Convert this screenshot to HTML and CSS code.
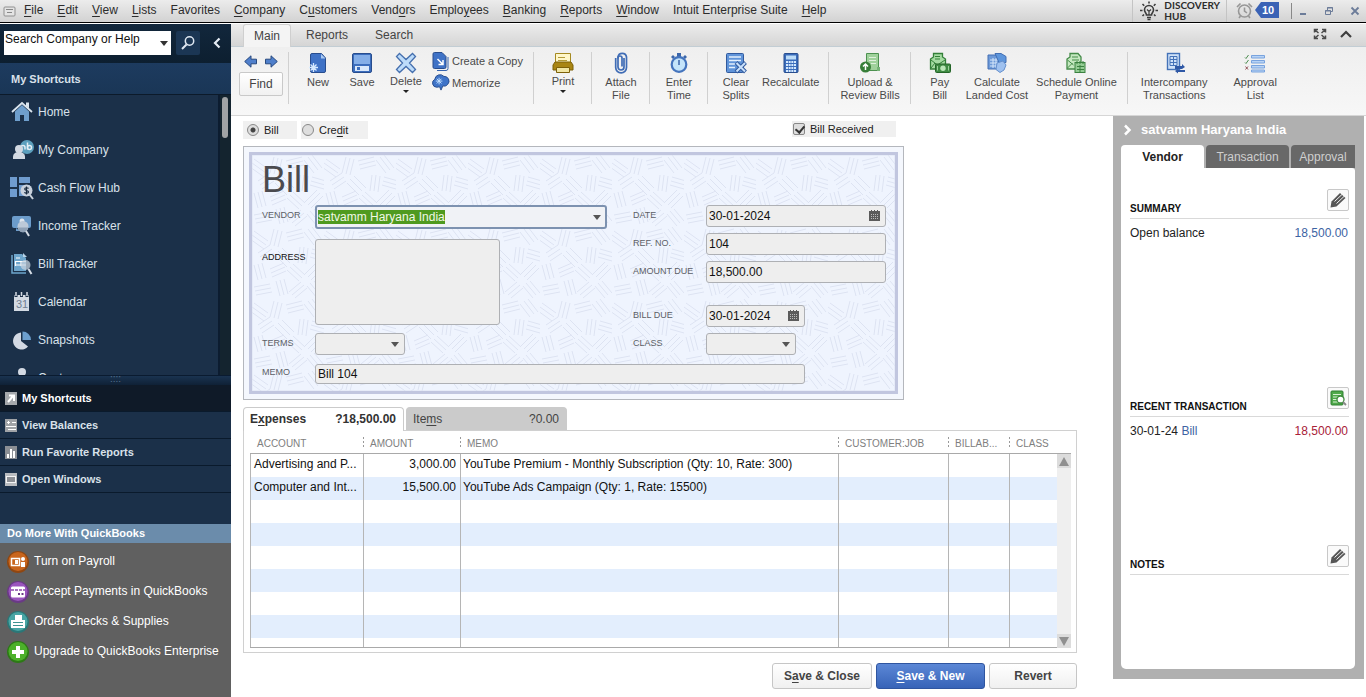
FILE: index.html
```
<!DOCTYPE html>
<html lang="en">
<head>
    <meta charset="UTF-8">
    <meta name="viewport" content="width=device-width, initial-scale=1.0">
    <title>Enter Bills</title>
    <link rel="stylesheet" href="styles.css">
</head>
<body>
    <header class="menubar">
        <svg class="app-icon" width="13" height="11" viewBox="0 0 13 11"><rect x="1" y="1" width="11" height="9" rx="1" fill="#e4e4e4" stroke="#909090"/><path d="M3 3.500h7M4 6.500h5" stroke="#888"/></svg>
        <nav class="menu">
            <a href="#"><u>F</u>ile</a>
            <a href="#"><u>E</u>dit</a>
            <a href="#"><u>V</u>iew</a>
            <a href="#"><u>L</u>ists</a>
            <a href="#">Favorites</a>
            <a href="#"><u>C</u>ompany</a>
            <a href="#">C<u>u</u>stomers</a>
            <a href="#">Vend<u>o</u>rs</a>
            <a href="#">Emplo<u>y</u>ees</a>
            <a href="#"><u>B</u>anking</a>
            <a href="#"><u>R</u>eports</a>
            <a href="#"><u>W</u>indow</a>
            <a href="#">Intuit Enterprise Suite</a>
            <a href="#"><u>H</u>elp</a>
        </nav>
        <a class="discovery" href="#">
            <svg width="20" height="20" viewBox="0 0 20 20" fill="none" stroke="#3c3c3c" stroke-width="1.600"><path d="M7.500 14c0-2-2-2.500-2-5a4.500 4.500 0 0 1 9 0c0 2.500-2 3-2 5zM8 16.500h4M8.500 18.500h3"/><path d="M10 14v-4M8 8.500l2 2 2-2" stroke-width="1.200"/><path d="M10 .5v2M1 9.500h2.500M16.500 9.500H19M3.500 3l1.700 1.700M16.500 3l-1.700 1.700M3.500 15l1.500-1.500M16.500 15L15 13.500"/></svg>
            <span>DISCOVERY<br>HUB</span>
        </a>
        <a class="reminders" href="#">
            <svg width="17" height="17" viewBox="0 0 17 17" fill="none" stroke="#979797" stroke-width="1.600"><circle cx="8.500" cy="9" r="6"/><path d="M8.500 5.500V9l2.500 2M1 5l3.500-3.500M16 5l-3.500-3.500M4.500 14L3 16M12.500 14l1.500 2"/></svg>
            <span class="count">10</span>
        </a>
        <div class="window-buttons">
            <button aria-label="Minimize"><svg width="10" height="10" viewBox="0 0 10 10"><path d="M2 8h6" stroke="#6c7c99" stroke-width="2"/></svg></button>
            <button aria-label="Restore"><svg width="10" height="10" viewBox="0 0 10 10" fill="none" stroke="#6c7c99"><path d="M3.500 4V1.500h5v4H7M3 2h6"/><path d="M1.500 4.500h5v4h-5zM1 5h6"/></svg></button>
            <button aria-label="Close"><svg width="10" height="10" viewBox="0 0 10 10"><path d="M1.500 1.500l7 7M8.500 1.500l-7 7" stroke="#6c7c99" stroke-width="1.800"/></svg></button>
        </div>
    </header>

    <div class="workspace">
        <aside class="sidebar">
            <div class="search">
                <div class="search-box">
                    <input type="text" id="busca" aria-label="Search Company or Help" value="Search Company or Help">
                    <svg class="arrow" width="8" height="5" viewBox="0 0 8 5"><path d="M0 0h8L4 5z" fill="#333"/></svg>
                </div>
                <button class="search-go" aria-label="Search"><svg width="16" height="16" viewBox="0 0 16 16" fill="none" stroke="#dfe8f2"><circle cx="9.500" cy="6" r="4.200" stroke-width="1.500"/><path d="M6.500 9.500L2 14" stroke-width="2"/></svg></button>
                <button class="collapse" aria-label="Collapse"><svg width="8" height="12" viewBox="0 0 8 12"><path d="M6.500 1.500L2 6l4.500 4.500" fill="none" stroke="#e6edf5" stroke-width="2.200"/></svg></button>
            </div>
            <h2 class="side-title">My Shortcuts</h2>
            <div class="shortcuts">
                <ul>
                    <li><a href="#"><svg width="24" height="24" viewBox="0 0 24 24"><path d="M5 11.500l7-6.500 7 6.500V21h-5v-6h-4v6H5z" fill="#6f9fcd"/><path d="M16 2.500h3v6l-3-3z" fill="#dbe5ef"/><path d="M2 12L12 3l10 9" fill="none" stroke="#dbe5ef" stroke-width="1.800"/></svg>Home</a></li>
                    <li><a href="#"><svg width="24" height="24" viewBox="0 0 24 24"><circle cx="17" cy="9" r="7" fill="#5c9fbd"/><path d="M15 11.500v-2a2 2 0 0 0-4 0M17.500 4.500v7" stroke="#e4eef5" stroke-width="1.500" fill="none"/><circle cx="19.500" cy="9.500" r="2" stroke="#e4eef5" stroke-width="1.500" fill="none"/><circle cx="9" cy="11" r="4" fill="#d3d9e2"/><path d="M3 21v-2c0-3 2-5 6-5s6 2 6 5v2z" fill="#d3d9e2"/></svg>My Company</a></li>
                    <li><a href="#"><svg width="24" height="24" viewBox="0 0 24 24"><path d="M0 1h7v10H0zM9 1h11v6H9zM0 13h7v8H0zM9 9h11v11H9z" fill="#6f9ccf"/><circle cx="16.500" cy="14.500" r="6" fill="#c9d1dc"/><path d="M20 19l3 4" stroke="#c9d1dc" stroke-width="2"/><path d="M18.500 12.500c-.5-1-3.800-1.200-3.800.5 0 2 3.800 1 3.800 3 0 1.700-3.500 1.500-4 .3M16.500 10.500v8" stroke="#17293e" stroke-width="1.200" fill="none"/></svg>Cash Flow Hub</a></li>
                    <li><a href="#"><svg width="24" height="24" viewBox="0 0 24 24"><rect x="2" y="2" width="19" height="12" rx="2" fill="#6c9ccb"/><path d="M6 14v3h4z" fill="#6c9ccb"/><circle cx="12" cy="7" r="2.500" fill="#dfe6ee"/><circle cx="13" cy="12.500" r="5.500" fill="#bcc9d8"/><path d="M8 13.500h10a5 5 0 0 1-10 0z" fill="#8fa1b6"/><path d="M16 17l3 5" stroke="#d3dae4" stroke-width="2"/></svg>Income Tracker</a></li>
                    <li><a href="#"><svg width="24" height="24" viewBox="0 0 24 24"><path d="M2 3v18h14" fill="none" stroke="#6da5cc" stroke-width="1.500"/><path d="M4 2h8l4 4v13H4z" fill="#6da5cc"/><path d="M13 1l4 4h-4z" fill="#b7d1e5"/><path d="M6 6h4M5 9.500h11M5 13h11M5.500 9v5M11 9v5" stroke="#fff" stroke-width="1.200"/><circle cx="15.500" cy="13" r="5" fill="#c6d2dd" fill-opacity=".75"/><path d="M18.500 17l3 5" stroke="#d8dfe8" stroke-width="2"/></svg>Bill Tracker</a></li>
                    <li><a href="#"><svg width="24" height="24" viewBox="0 0 24 24"><path d="M4 5h15v16H4z" fill="#d3dae3"/><path d="M6 2v5M11.500 2v5M17 2v5" stroke="#1d3049" stroke-width="3"/><path d="M6 2v4M11.500 2v4M17 2v4" stroke="#d3dae3" stroke-width="1.500"/><text x="6" y="18" font-size="11" fill="#6f7f92">31</text></svg>Calendar</a></li>
                    <li><a href="#"><svg width="24" height="24" viewBox="0 0 24 24"><path d="M11 4.500V13l7 5.500A8.500 8.500 0 1 1 11 4.500z" fill="#d3d9e3"/><path d="M12.500 3.500a8.500 8.500 0 0 1 8.500 8.500h-8.500z" fill="#6c9fce"/></svg>Snapshots</a></li>
                    <li><a href="#"><svg width="24" height="24" viewBox="0 0 24 24"><circle cx="12" cy="6" r="4" fill="#d3d9e3"/><path d="M4 20c0-6 3-9 8-9s8 3 8 9z" fill="#d3d9e3"/></svg>Customers</a></li>
                </ul>
                <div class="side-scroll"><span></span></div>
            </div>
            <div class="grip"><span>::::</span></div>
            <ul class="views">
                <li class="active"><a href="#"><svg width="12" height="13" viewBox="0 0 12 13"><rect width="12" height="13" fill="#a5a8ac"/><path d="M3 10l5-6M4 3.500h5V9" stroke="#fff" stroke-width="2" fill="none"/></svg>My Shortcuts</a></li>
                <li><a href="#"><svg width="12" height="13" viewBox="0 0 12 13"><rect width="12" height="13" fill="#a0a3a7"/><path d="M2 3.500h3M3.500 2v3M7 3.500h4M1 7.500h10M3 10.500h8" stroke="#fff"/></svg>View Balances</a></li>
                <li><a href="#"><svg width="12" height="13" viewBox="0 0 12 13"><rect width="12" height="13" fill="#8b8f95"/><path d="M3 12V8M6 12V3M9 12V5" stroke="#fff" stroke-width="2"/></svg>Run Favorite Reports</a></li>
                <li><a href="#"><svg width="12" height="13" viewBox="0 0 12 13"><rect width="12" height="13" fill="#b9bcc0"/><rect x="1.500" y="3.500" width="9" height="6" fill="#8d9095" stroke="#f4f4f4"/></svg>Open Windows</a></li>
            </ul>
            <h2 class="more-title">Do More With QuickBooks</h2>
            <ul class="more">
                <li><a href="#"><svg width="22" height="22" viewBox="0 0 22 22"><circle cx="11" cy="11" r="11" fill="#8f4712"/><circle cx="11" cy="10.500" r="9.500" fill="#c8651d"/><path d="M4.500 7.500h8v7h-8z" fill="none" stroke="#fff" stroke-width="1.500"/><path d="M8 9h3v4H8zM14 11h4v5h-4z" fill="#fff"/><circle cx="16" cy="8" r="2" fill="#fff"/></svg>Turn on Payroll</a></li>
                <li><a href="#"><svg width="22" height="22" viewBox="0 0 22 22"><circle cx="11" cy="11" r="11" fill="#6a3a86"/><circle cx="11" cy="10.500" r="9.500" fill="#9a55bd"/><rect x="4" y="5.500" width="14" height="11" rx="1.500" fill="#fff"/><path d="M4 9h14" stroke="#8a49ab" stroke-width="1.500" stroke-dasharray="3 1"/><path d="M11 13h2M14.500 13h2" stroke="#6a3a86" stroke-width="2"/></svg>Accept Payments in QuickBooks</a></li>
                <li><a href="#"><svg width="22" height="22" viewBox="0 0 22 22"><circle cx="11" cy="11" r="11" fill="#2b7777"/><circle cx="11" cy="10.500" r="9.500" fill="#48a5a4"/><path d="M8 4h7v5H8zM4 9h14v8H4z" fill="#fff"/><path d="M6 11.500h10M6 14.500h10" stroke="#3e9392" stroke-width="1.200"/></svg>Order Checks &amp; Supplies</a></li>
                <li><a href="#"><svg width="22" height="22" viewBox="0 0 22 22"><circle cx="11" cy="11" r="11" fill="#2d7a16"/><circle cx="11" cy="10.500" r="9.500" fill="#4cb02a"/><path d="M11 5v12M5 11h12" stroke="#fff" stroke-width="4"/></svg>Upgrade to QuickBooks Enterprise</a></li>
            </ul>
        </aside>

        <div class="window">
            <div class="ribbon-tabs">
                <button class="active">Main</button>
                <button>Reports</button>
                <button>Search</button>
                <div class="ribbon-right">
                    <button aria-label="Full screen"><svg width="14" height="12" viewBox="0 0 14 12" fill="none" stroke="#4a4a4a" stroke-width="1.500"><path d="M1.500 4.500v-3H5M9 1.500h3.500v3M1.500 7.500v3H5M9 10.500h3.500v-3M2 2l3.500 3M12 2L8.500 5M2 10l3.500-3M12 10L8.500 7"/></svg></button>
                    <button aria-label="Hide ribbon"><svg width="12" height="8" viewBox="0 0 12 8"><path d="M1 7l5-5 5 5" fill="none" stroke="#3f3f3f" stroke-width="2.200"/></svg></button>
                </div>
            </div>

            <div class="toolbar">
                <div class="find-group">
                    <div class="find-arrows">
                        <button aria-label="Previous"><svg width="13" height="13" viewBox="0 0 13 13"><path d="M.7 6.500L7 .8v3.400h5.500v4.600H7v3.400z" fill="#4f7fcb" stroke="#27497f"/></svg></button>
                        <button aria-label="Next"><svg width="13" height="13" viewBox="0 0 13 13"><path d="M12.300 6.500L6 .8v3.400H.5v4.600H6v3.400z" fill="#4f7fcb" stroke="#27497f"/></svg></button>
                    </div>
                    <button class="find">Find</button>
                </div>
                <div class="group">
                    <button class="tool"><svg width="22" height="22" viewBox="0 0 22 22"><path d="M5 1.500h9.500l4 4.500v13a1.500 1.500 0 0 1-1.500 1.500H5A1.500 1.500 0 0 1 3.500 19V3A1.500 1.500 0 0 1 5 1.500z" fill="#3f72c6" stroke="#284d8e"/><path d="M14 2v4.500h4.500z" fill="#a9c9f2"/><path d="M6.500 11v9M2 15.500h9M3.500 12.500l6 6M9.500 12.500l-6 6" stroke="#d5e9ff" stroke-width="1.300"/></svg>New</button>
                    <button class="tool"><svg width="22" height="22" viewBox="0 0 22 22"><rect x="1.500" y="1.500" width="19" height="19" rx="1.500" fill="#3b6dbd" stroke="#284d8e"/><rect x="3" y="3" width="16" height="9" fill="#84aee8"/><rect x="4" y="14" width="14" height="5" fill="#d9e8fb"/><rect x="6" y="15" width="3" height="3" fill="#3b6dbd"/></svg>Save</button>
                    <button class="tool drop"><svg width="22" height="22" viewBox="0 0 22 22"><path d="M4.500 1.500l6.500 6 6.500-6 3 3-6 6.500 6 6.500-3 3-6.500-6-6.500 6-3-3 6-6.500-6-6.500z" fill="#bddcfa" stroke="#456fae" stroke-width="1.300"/></svg>Delete<i></i></button>
                    <div class="stack">
                        <button><svg width="17" height="20" viewBox="0 0 17 20"><path d="M4.500 19.500h9a2 2 0 0 0 2-2V6" fill="none" stroke="#3563ad"/><path d="M2 1.500h7.500l4 4V16a1.500 1.500 0 0 1-1.500 1.500H2A1.500 1.500 0 0 1 .5 16V3A1.500 1.500 0 0 1 2 1.500z" fill="#3f72c6" stroke="#284d8e"/><path d="M5 8l5 5M10.500 9v4.500H6" stroke="#fff" stroke-width="1.500" fill="none"/></svg>Create a Copy</button>
                        <button><svg width="19" height="18" viewBox="0 0 19 18"><path d="M5 13.500A4.500 4.500 0 0 1 3 5a5.500 5.500 0 0 1 9.500-3 5 5 0 0 1 4 8.500c-1.500 2-3.500 2-5 1.500l-2 4.500-1.500-3.500z" fill="#3f74c8" stroke="#284d8e"/><path d="M7.500 3.500v7M4 7h7M5 4.500l5 5M10 4.500l-5 5" stroke="#c3e0ff"/></svg>Memorize</button>
                    </div>
                </div>
                <div class="group">
                    <button class="tool drop"><svg width="22" height="22" viewBox="0 0 22 22"><path d="M3.500 1.500h15v11h-15z" fill="#fff7c9" stroke="#a58a22"/><path d="M6 5.500h7M6 8.500h9" stroke="#b29a3a"/><path d="M3 10h16l2 3v5H1v-5z" fill="#a98513" stroke="#7d6109"/><path d="M4.500 15.500h13v5h-13z" fill="#f1e6a4" stroke="#7d6109"/></svg>Print<i></i></button>
                </div>
                <div class="group">
                    <button class="tool"><svg width="22" height="22" viewBox="0 0 22 22" fill="none" stroke="#3f6cb5" stroke-width="1.700"><path d="M14 6v9a3 3 0 0 1-6 0V6a2 2 0 0 1 4 0v8.500"/><path d="M8 6.500V5a4.300 4.300 0 0 1 8.500 0v10.500a5.300 5.300 0 0 1-10.800 0V6"/></svg>Attach<br>File</button>
                </div>
                <div class="group">
                    <button class="tool"><svg width="22" height="22" viewBox="0 0 22 22"><path d="M9 1h4v4H9zM3 5l2-2 2 2-2 2zM15 5l2-2 2 2-2 2z" fill="#3b66aa"/><circle cx="11" cy="12.500" r="7.300" fill="#c4e4fa" stroke="#4474bd" stroke-width="2.200"/><path d="M11 8v5" stroke="#3b66aa" stroke-width="1.500"/></svg>Enter<br>Time</button>
                </div>
                <div class="group tight">
                    <button class="tool"><svg width="22" height="22" viewBox="0 0 22 22"><rect x="1.500" y="1.500" width="17" height="19" rx="1" fill="#6094d9" stroke="#315a9e"/><path d="M4 5h12M4 8.500h12M4 12h7M4 15.500h6" stroke="#e4f0fd" stroke-width="1.500"/><path d="M11 10.500l9.500 9.500M20.500 10.500L11 20" stroke="#315a9e" stroke-width="4"/><path d="M11.500 11l8.500 8.500M20 11l-8.500 8.500" stroke="#c8e0fb" stroke-width="2"/></svg>Clear<br>Splits</button>
                    <button class="tool"><svg width="22" height="22" viewBox="0 0 22 22"><rect x="4" y="1.500" width="14" height="19" rx="1" fill="#3a6cbb" stroke="#284d8e"/><rect x="6" y="3.500" width="10" height="4" fill="#bcdcf8"/><path d="M6 10h10M6 13h10M6 16h10M6 19h10" stroke="#d4e8fd" stroke-width="2" stroke-dasharray="2 .67"/></svg>Recalculate</button>
                </div>
                <div class="group">
                    <button class="tool"><svg width="22" height="22" viewBox="0 0 22 22"><path d="M7.500 1.500h12v17h-12z" fill="#9fd19b" stroke="#4c9150"/><path d="M10 5.500h7M10 8.500h7M12 11.500h5" stroke="#def0dc"/><path d="M18 19v-4h3v4z" fill="#76b277"/><circle cx="6.500" cy="15" r="5.500" fill="#377e39"/><path d="M6.500 18v-5M4 14.500l2.500-2.500L9 14.500" stroke="#fff" stroke-width="1.500" fill="none"/></svg>Upload &amp;<br>Review Bills</button>
                </div>
                <div class="group">
                    <button class="tool"><svg width="22" height="22" viewBox="0 0 22 22"><path d="M1.500 7l3-2V1.500h9V5l3 2v10h-15z" fill="#a5dba2" stroke="#348039" stroke-width="1.300"/><path d="M2 8l6.500 5L16 8M2 16l4-5M6 4.500h5M6 7h5" fill="none" stroke="#348039"/><rect x="6.500" y="12" width="15" height="8.500" rx="1" fill="#3e8a42" stroke="#246528"/><circle cx="14" cy="16.200" r="2.700" fill="#b9e5b6"/><path d="M8.500 14v4.500M19.500 14v4.500" stroke="#9bd29a"/></svg>Pay<br>Bill</button>
                    <button class="tool"><svg width="22" height="22" viewBox="0 0 22 22"><path d="M2 3h12v14H2z" fill="#6e9ad8" stroke="#426fb4"/><path d="M4 8h9M4 11h9M4 14h9M7 6v10M10 6v10" stroke="#d5e6fa"/><path d="M9 1.500h6l5 3v6h-7z" fill="#5e96dc" stroke="#426fb4"/><path d="M11 11l6-2 3 4-2 5-4 2.500-4-3z" fill="#9fc1ef" stroke="#6590cd"/></svg>Calculate<br>Landed Cost</button>
                    <button class="tool"><svg width="22" height="22" viewBox="0 0 22 22"><path d="M2 7l3-2V1.500h8L16 5v12H2z" fill="#c4e8c0" stroke="#458b49" stroke-width="1.300"/><path d="M2.500 8l6 5M2.500 16l5-5M7 5h6M7 8h7" fill="none" stroke="#458b49"/><rect x="10" y="10.500" width="10" height="10" fill="#94cd94" stroke="#3b8140"/><path d="M12 9v3M15 9v3M18 9v3M12 14.500h7M12 17.500h7M15 13v7" stroke="#3b8140"/></svg>Schedule Online<br>Payment</button>
                </div>
                <div class="group last">
                    <button class="tool"><svg width="22" height="22" viewBox="0 0 22 22"><rect x="4.500" y="1.500" width="12" height="16" fill="#cfe1f8" stroke="#4472b8" stroke-width="1.400"/><path d="M7 4.500h7v9H7zM7 7.500h7M7 10.500h7M10.500 5v9" fill="none" stroke="#4472b8"/><path d="M12 14h7v-2l3 3-3 2h-7zM22 18h-7v-1l-3 2 3 2.500V20h7z" fill="#2f58a6"/></svg>Intercompany<br>Transactions</button>
                    <button class="tool"><svg width="22" height="22" viewBox="0 0 22 22"><path d="M7.500 3.500h13v2.500h-13zM7.500 8.500h13V11h-13zM7.500 13.500h13V16h-13zM7.500 18h13v2h-13z" fill="#b8d3f5" stroke="#78a3de"/><path d="M1 5.500l1 1L4.500 3M1 10.500l1 1L4.500 8" fill="none" stroke="#4b8c4f"/><path d="M1.500 14.500l2.500 3M4 14.500l-2.500 3" stroke="#904f56"/></svg>Approval<br>List</button>
                </div>
            </div>

            <div class="body">
                <main class="form">
                    <div class="type-row">
                        <label><input type="radio" name="tipo" checked>Bill</label>
                        <label class="credit"><input type="radio" name="tipo"><span>Cre<u>d</u>it</span></label>
                        <label class="received"><input type="checkbox" checked>Bill Received</label>
                    </div>

                    <section class="check">
                        <div class="check-inner">
                            <svg class="paper" width="100%" height="100%">
                                <defs>
                                    <pattern id="trama" width="72" height="72" patternUnits="userSpaceOnUse">
                                        <path d="M2 4l14 10M0 8l14 10M-2 12l14 10M22 2l-4 16M26 3l-4 16M30 4l-4 16M34 6l16-4M35 10l16-4M36 14l16-4M56 2l10 13M60 0l10 13M52 5l10 13M6 26l12-8M8 30l12-8M10 34l12-8M26 24l12 12M30 21l12 12M23 28l12 12M48 20l-2 16M52 20l-2 16M56 21l-2 16M60 22l14 4M59 26l14 4M58 30l14 4M2 38l4 15M6 37l4 15M10 36l4 15M18 42l14-6M19 46l14-6M20 50l14-6M38 40l12 11M41 37l12 11M35 43l12 11M56 50l12-12M59 53l12-12M53 47l12-12M2 60l16-3M3 64l16-3M4 68l16-3M24 54l4 15M28 53l4 15M32 52l4 15M40 68l12-10M43 71l12-10M37 65l12-10M58 56l10 12M62 54l10 12M55 59l10 12"/>
                                    </pattern>
                                </defs>
                                <rect width="100%" height="100%" fill="url(#trama)"/>
                            </svg>
                            <h1>Bill</h1>
                            <div class="columns">
                                <div class="left">
                                    <div class="field">
                                        <label for="vendor">VENDOR</label>
                                        <div class="combo"><input type="text" id="vendor" value="satvamm Haryana India"><svg class="arrow" width="8" height="5" viewBox="0 0 8 5"><path d="M0 0h8L4 5z" fill="#555"/></svg></div>
                                    </div>
                                    <div class="field address">
                                        <label for="address">ADDRESS</label>
                                        <textarea id="address"></textarea>
                                    </div>
                                    <div class="field">
                                        <label for="terms">TERMS</label>
                                        <div class="combo short"><select id="terms"><option></option></select><svg class="arrow" width="8" height="5" viewBox="0 0 8 5"><path d="M0 0h8L4 5z" fill="#555"/></svg></div>
                                    </div>
                                </div>
                                <div class="right">
                                    <div class="field">
                                        <label for="date">DATE</label>
                                        <div class="combo"><input type="text" id="date" value="30-01-2024"><svg class="cal" width="11" height="11" viewBox="0 0 11 11"><path d="M0 1h11v10H0z" fill="#5b5b5b"/><path d="M2.500 0v2M5.500 0v2M8.500 0v2" stroke="#5b5b5b"/><path d="M2 4.500h8M2 6.500h8M2 8.500h8" stroke="#bbb" stroke-dasharray="1 1"/></svg></div>
                                    </div>
                                    <div class="field">
                                        <label for="ref">REF. NO.</label>
                                        <input type="text" id="ref" value="104">
                                    </div>
                                    <div class="field">
                                        <label for="amount">AMOUNT DUE</label>
                                        <input type="text" id="amount" value="18,500.00">
                                    </div>
                                    <div class="field due">
                                        <label for="due">BILL DUE</label>
                                        <div class="combo"><input type="text" id="due" value="30-01-2024"><svg class="cal" width="11" height="11" viewBox="0 0 11 11"><path d="M0 1h11v10H0z" fill="#5b5b5b"/><path d="M2.500 0v2M5.500 0v2M8.500 0v2" stroke="#5b5b5b"/><path d="M2 4.500h8M2 6.500h8M2 8.500h8" stroke="#bbb" stroke-dasharray="1 1"/></svg></div>
                                    </div>
                                    <div class="field">
                                        <label for="class">CLASS</label>
                                        <div class="combo short"><select id="class"><option></option></select><svg class="arrow" width="8" height="5" viewBox="0 0 8 5"><path d="M0 0h8L4 5z" fill="#555"/></svg></div>
                                    </div>
                                </div>
                            </div>
                            <div class="field memo">
                                <label for="memo">MEMO</label>
                                <input type="text" id="memo" value="Bill 104">
                            </div>
                        </div>
                    </section>

                    <div class="tabs">
                        <button class="active"><span>E<u>x</u>penses</span><span>?18,500.00</span></button>
                        <button><span>Ite<u>m</u>s</span><span>?0.00</span></button>
                    </div>
                    <section class="lines">
                        <div class="table-wrap">
                            <table>
                                <thead>
                                    <tr>
                                        <th class="c-account">ACCOUNT</th>
                                        <th class="c-amount">AMOUNT</th>
                                        <th>MEMO</th>
                                        <th class="c-job">CUSTOMER:JOB</th>
                                        <th class="c-bill">BILLAB...</th>
                                        <th class="c-class">CLASS</th>
                                    </tr>
                                </thead>
                                <tbody>
                                    <tr><td>Advertising and P...</td><td class="num">3,000.00</td><td>YouTube Premium - Monthly Subscription (Qty: 10, Rate: 300)</td><td></td><td></td><td></td></tr>
                                    <tr><td>Computer and Int...</td><td class="num">15,500.00</td><td>YouTube Ads Campaign (Qty: 1, Rate: 15500)</td><td></td><td></td><td></td></tr>
                                    <tr><td></td><td></td><td></td><td></td><td></td><td></td></tr>
                                    <tr><td></td><td></td><td></td><td></td><td></td><td></td></tr>
                                    <tr><td></td><td></td><td></td><td></td><td></td><td></td></tr>
                                    <tr><td></td><td></td><td></td><td></td><td></td><td></td></tr>
                                    <tr><td></td><td></td><td></td><td></td><td></td><td></td></tr>
                                    <tr><td></td><td></td><td></td><td></td><td></td><td></td></tr>
                                    <tr><td></td><td></td><td></td><td></td><td></td><td></td></tr>
                                </tbody>
                            </table>
                        </div>
                        <div class="scroll">
                            <button aria-label="Up"><svg width="10" height="9" viewBox="0 0 10 9"><path d="M5 0l5 9H0z" fill="#909090"/></svg></button>
                            <button aria-label="Down"><svg width="10" height="9" viewBox="0 0 10 9"><path d="M5 9L0 0h10z" fill="#909090"/></svg></button>
                        </div>
                    </section>

                    <div class="actions">
                        <button>S<u>a</u>ve &amp; Close</button>
                        <button class="primary"><u>S</u>ave &amp; New</button>
                        <button class="revert">Revert</button>
                    </div>
                </main>

                <aside class="details">
                    <h2><svg width="9" height="12" viewBox="0 0 9 12"><path d="M2 1.500L6.500 6 2 10.500" fill="none" stroke="#fff" stroke-width="2.500"/></svg>satvamm Haryana India</h2>
                    <div class="detail-tabs">
                        <button class="active">Vendor</button>
                        <button>Transaction</button>
                        <button>Approval</button>
                    </div>
                    <div class="detail-body">
                        <section class="summary">
                            <div class="head"><h3>SUMMARY</h3><button aria-label="Edit summary"><svg width="18" height="18" viewBox="0 0 18 18"><path d="M1.500 16.500l1-6L11 2l5.500 5-9 8.500z" fill="#565656"/><path d="M5.500 10.500l8-7.500M7.500 12.500l8-7.500" stroke="#f4f4f4"/></svg></button></div>
                            <p><span>Open balance</span><a href="#">18,500.00</a></p>
                        </section>
                        <section class="recent">
                            <div class="head"><h3>RECENT TRANSACTION</h3><button aria-label="Report"><svg width="18" height="18" viewBox="0 0 18 18"><rect x="2" y="2" width="12" height="14" rx="1" fill="#4fa94a" stroke="#2f7f31"/><path d="M4 5.500h8M4 8h5M4 10.500h4M4 13h5" stroke="#d7f0d3"/><circle cx="11.500" cy="10.500" r="3.500" fill="#fff" stroke="#3d8b3c" stroke-width="1.300"/><path d="M14 13l3 3" stroke="#888" stroke-width="1.800"/></svg></button></div>
                            <p><span>30-01-24 <a href="#">Bill</a></span><span class="red">18,500.00</span></p>
                        </section>
                        <section class="notes">
                            <div class="head"><h3>NOTES</h3><button aria-label="Edit notes"><svg width="18" height="18" viewBox="0 0 18 18"><path d="M1.500 16.500l1-6L11 2l5.500 5-9 8.500z" fill="#565656"/><path d="M5.500 10.500l8-7.500M7.500 12.500l8-7.500" stroke="#f4f4f4"/></svg></button></div>
                        </section>
                    </div>
                </aside>
            </div>
        </div>
    </div>
    <script>
        let vendor = document.getElementById("vendor");
        vendor.focus();
        vendor.select();
    </script>
</body>
</html>
```
FILE: styles.css
```
*{
    box-sizing: border-box;
}
body{
    margin: 0;
    height: 100vh;
    display: flex;
    flex-direction: column;
    overflow: hidden;
    background-color: #fff;
    font-family: "Liberation Sans", Arial, sans-serif;
    font-size: 12px;
    color: #222;
}
button, input, select, textarea{
    font-family: inherit;
    font-size: 12px;
    color: #111;
}
button{
    border: none;
    background: none;
    padding: 0;
    margin: 0;
}
h1, h2, h3, p, ul{
    margin: 0;
    padding: 0;
}
ul{
    list-style: none;
}
a{
    text-decoration: none;
    color: inherit;
}
svg{
    display: block;
    flex: none;
}
u{
    text-underline-offset: 2px;
}

/* menu bar */
.menubar{
    height: 23px;
    flex: none;
    display: flex;
    align-items: center;
    background: linear-gradient(#ececec, #d2d2d2);
    border-bottom: 1px solid #000;
    padding: 0 6px 0 3px;
}
.menu{
    display: flex;
    gap: 14px;
    padding: 0 0 3px 8px;
    margin-right: auto;
    white-space: nowrap;
    color: #2c2c2c;
}
.discovery{
    display: flex;
    align-items: center;
    gap: 5px;
    height: 22px;
    padding: 0 6px;
    border-left: 1px solid #c4c4c4;
    border-right: 1px solid #c4c4c4;
    font-family: Lato, sans-serif;
    font-size: 10px;
    font-weight: bold;
    line-height: 11px;
    color: #2c2c2c;
}
.reminders{
    display: flex;
    align-items: center;
    gap: 2px;
    padding: 0 12px 2px 9px;
}
.count{
    background-color: #3a62b5;
    color: #fff;
    width: 24px;
    line-height: 16px;
    padding-left: 7px;
    font-size: 11px;
    font-weight: bold;
    clip-path: polygon(0 50%, 6px 0, 100% 0, 100% 100%, 6px 100%);
}
.window-buttons{
    display: flex;
    gap: 16px;
    border-left: 1px solid #888;
    padding: 3px 0 3px 6px;
}

.workspace{
    flex: 1;
    min-height: 0;
    display: flex;
    padding-top: 1px;
}

/* left side bar */
.sidebar{
    width: 231px;
    flex: none;
    display: flex;
    flex-direction: column;
    background-color: #1b3049;
    color: #d9e1ea;
}
.search{
    height: 39px;
    flex: none;
    display: flex;
    align-items: center;
    background: linear-gradient(#12273c, #0d1f30);
    padding: 0 0 2px 4px;
}
.search-box{
    position: relative;
    width: 167px;
}
.search-box input{
    display: block;
    width: 100%;
    height: 24px;
    border: none;
    background-color: #fff;
    padding: 0 20px 8px 1px;
}
.arrow{
    position: absolute;
    right: 6px;
    top: 50%;
    margin-top: -2px;
    pointer-events: none;
}
.search-box .arrow{
    right: 3px;
}
.search-go{
    width: 24px;
    height: 24px;
    margin: 0 13px 0 5px;
    padding: 4px;
    background-color: #1b3654;
    border-radius: 2px;
}
.side-title{
    height: 32px;
    flex: none;
    padding-left: 11px;
    line-height: 32px;
    font-size: 11px;
    background: linear-gradient(#1d3b5f, #1a3656);
    border-bottom: 1px solid #0c1a2a;
}
.shortcuts{
    height: 280px;
    flex: none;
    display: flex;
    overflow: hidden;
}
.shortcuts ul{
    flex: 1;
}
.shortcuts a{
    display: flex;
    align-items: center;
    gap: 4px;
    height: 38px;
    padding: 0 0 4px 10px;
}
.side-scroll{
    width: 13px;
    background-color: #14242f;
    border-left: 2px solid #0c1c30;
    padding: 2px 2px;
}
.side-scroll span{
    display: block;
    width: 6px;
    height: 41px;
    border-radius: 3px;
    background-color: #a0a3a5;
}
.grip{
    height: 10px;
    flex: none;
    line-height: 6px;
    font-size: 10px;
    text-align: center;
    color: #55708c;
    border-top: 1px solid #0a1b30;
    background: linear-gradient(#1a3350, #0f2136);
}
.views a{
    display: flex;
    align-items: center;
    gap: 5px;
    height: 27px;
    padding-left: 5px;
    font-size: 11px;
    font-weight: bold;
    border-bottom: 1px solid #0a1a2c;
}
.views .active a{
    background-color: #0f1a28;
    color: #fff;
}
.more-title{
    margin-top: 31px;
    line-height: 19px;
    padding-left: 7px;
    font-size: 11px;
    color: #fff;
    background-color: #6b8cab;
}
.more{
    flex: 1;
    padding-top: 3px;
    background-color: #606060;
    color: #fff;
}
.more a{
    display: flex;
    align-items: center;
    gap: 5px;
    height: 30px;
    padding-left: 7px;
    white-space: nowrap;
}
.more svg{
    margin-top: 2px;
}

/* ribbon */
.window{
    flex: 1;
    min-width: 0;
    display: flex;
    flex-direction: column;
}
.ribbon-tabs{
    height: 23px;
    flex: none;
    display: flex;
    background: linear-gradient(#ececec, #d5d5d5);
    border-bottom: 1px solid #c2cdd4;
    padding-left: 12px;
}
.ribbon-tabs > button{
    padding: 0 10px;
    margin-right: 7px;
    color: #444;
}
.ribbon-tabs .active{
    height: 23px;
    background-color: #f4f4f4;
    border: 1px solid #cfcfcf;
    border-bottom: none;
    border-radius: 3px 3px 0 0;
    margin-right: 5px;
}
.ribbon-right{
    display: flex;
    align-items: center;
    gap: 13px;
    margin-left: auto;
    padding: 0 14px 2px 0;
}
.toolbar{
    height: 69px;
    flex: none;
    display: flex;
    align-items: flex-start;
    background: linear-gradient(#efefef, #f7f7f7);
    border-bottom: 1px solid #d6d6d6;
    padding: 5px 0 0 8px;
    white-space: nowrap;
}
.find-group{
    width: 44px;
    margin-right: 5px;
}
.find-arrows{
    display: flex;
    justify-content: space-between;
    padding: 3px 5px 4px;
}
.find{
    width: 44px;
    height: 24px;
    font-size: 12px;
    color: #444;
    background: linear-gradient(#fff, #f1f1f1);
    border: 1px solid #c9c9c9;
    border-radius: 2px;
}
.group{
    display: flex;
    align-items: flex-start;
    gap: 8px;
    height: 52px;
    padding: 0 10px 0 11px;
    border-left: 1px solid #d0d0d0;
}
.group.tight{
    padding: 0 9px 0 10px;
}
.group.last{
    gap: 26px;
    padding-left: 13px;
}
.tool{
    min-width: 36px;
    font-size: 11px;
    line-height: 13px;
    color: #4a4a4a;
    text-align: center;
}
.tool svg{
    margin: 0 auto 2px;
}
.tool.drop svg{
    margin-bottom: 1px;
}
.tool i{
    display: block;
    width: 0;
    margin: 2px auto 0;
    border: 3px solid transparent;
    border-top-color: #222;
    border-bottom: none;
}
.stack{
    margin-top: -2px;
}
.stack button{
    display: flex;
    align-items: center;
    gap: 2px;
    height: 22px;
    font-size: 11px;
    color: #4a4a4a;
}
.stack svg{
    width: 18px;
}

/* bill form */
.body{
    flex: 1;
    min-height: 0;
    display: flex;
}
.form{
    flex: 1;
    min-width: 0;
    display: flex;
    flex-direction: column;
    padding: 5px 36px 8px 12px;
}
.type-row{
    display: flex;
    align-items: center;
    gap: 4px;
    max-width: 653px;
    margin-bottom: 7px;
}
.type-row label{
    display: flex;
    align-items: center;
    gap: 5px;
    width: 54px;
    height: 18px;
    padding-left: 4px;
    font-size: 11px;
    background-color: #f0f0f0;
}
.type-row .credit{
    width: 67px;
    padding-left: 1px;
}
.type-row .received{
    width: 104px;
    height: 16px;
    margin-left: auto;
    margin-bottom: 2px;
    padding-left: 1px;
}
.type-row input{
    appearance: none;
    width: 12px;
    height: 12px;
    margin: 0;
    border: 1px solid #888;
    border-radius: 50%;
    background-color: #dedede;
    position: relative;
}
.type-row input[type=radio]:checked{
    background: radial-gradient(circle, #444 0 2px, #dedede 3px);
}
.type-row input[type=checkbox]{
    border-radius: 2px;
}
.type-row input[type=checkbox]:checked::after{
    content: "";
    position: absolute;
    left: 3px;
    top: 0;
    width: 4px;
    height: 7px;
    border: solid #333;
    border-width: 0 2px 2px 0;
    transform: rotate(40deg);
}
.check{
    flex: none;
    max-width: 661px;
    border: 1px solid #b4b7bd;
    padding: 5px;
    background-color: #f4f7fd;
    margin-bottom: 7px;
}
.check-inner{
    position: relative;
    border: 3px solid #c1c6df;
    background-color: #eff4fe;
    padding: 0 9px 7px 10px;
}
.paper{
    position: absolute;
    left: 0;
    top: 0;
    stroke: #dde3f2;
    stroke-width: 1;
}
.check h1, .columns, .memo{
    position: relative;
}
.check h1{
    font-size: 36px;
    line-height: 50px;
    font-weight: normal;
    color: #4b4b4f;
}
.columns{
    display: grid;
    grid-template-columns: 371px 1fr;
}
.field{
    display: flex;
    margin-bottom: 6px;
}
.field label{
    width: 53px;
    flex: none;
    line-height: 20px;
    font-size: 9px;
    color: #5c5f66;
}
.right .field label{
    width: 73px;
}
.field input, .field select, .field textarea{
    display: block;
    width: 100%;
    height: 22px;
    border: 1px solid #aeb0b4;
    border-radius: 3px;
    background-color: #eee;
    padding: 0 2px;
    margin: 0;
    outline: none;
}
.field select{
    appearance: none;
}
.combo{
    position: relative;
    width: 100%;
}
.left .combo{
    width: 292px;
}
.left .short, .right .short{
    width: 90px;
}
#vendor{
    height: 24px;
    border: 2px solid #7d92b0;
    background-color: #f0f2f6;
    padding: 0 1px;
}
#vendor::selection{
    background-color: #4f9a1f;
    color: #f2f8e6;
}
.left .address{
    margin: 10px 0 8px;
}
.address label{
    line-height: 36px;
    color: #111;
}
.field textarea{
    width: 185px;
    height: 86px;
    resize: none;
}
.cal{
    position: absolute;
    right: 6px;
    top: 5px;
}
.right .due{
    margin-top: 22px;
}
.due .combo{
    width: 99px;
}
.left .field:last-child, .right .field:last-child{
    margin-bottom: 0;
}
.memo{
    max-width: 543px;
    margin: 9px 0 0;
}
.memo label{
    line-height: 16px;
}
.memo input{
    height: 20px;
}

/* expenses grid */
.tabs{
    flex: none;
    display: flex;
    align-items: flex-end;
    gap: 2px;
    margin-bottom: -1px;
    position: relative;
}
.tabs button{
    display: flex;
    justify-content: space-between;
    align-items: center;
    width: 161px;
    height: 23px;
    margin-bottom: 1px;
    padding: 0 7px 0 6px;
    border: 1px solid #cbcbcb;
    border-bottom: none;
    border-radius: 4px 4px 0 0;
    background-color: #cbcbcb;
    color: #444;
}
.tabs .active{
    height: 24px;
    margin-bottom: 0;
    padding-bottom: 2px;
    background-color: #fff;
    font-weight: bold;
    color: #333;
}
.lines{
    flex: 1;
    min-height: 120px;
    display: flex;
    border: 1px solid #d0d0d0;
    padding: 0 5px 4px 6px;
}
.table-wrap{
    flex: 1;
    min-width: 0;
    overflow: hidden;
    border-bottom: 1px solid #a9a9a9;
}
table{
    width: 100%;
    table-layout: fixed;
    border-collapse: separate;
    border-spacing: 0;
}
th{
    height: 23px;
    padding: 3px 0 0 7px;
    font-size: 10px;
    font-weight: normal;
    text-align: left;
    color: #808080;
    border-bottom: 1px solid #a9a9a9;
    background: repeating-linear-gradient(#999 0 2px, transparent 2px 4px) 0 6px / 1px 11px no-repeat;
}
th:first-child{
    background: none;
}
td{
    height: 23px;
    padding: 0 4px 4px 2px;
    border-left: 1px solid #b5b5b5;
    white-space: nowrap;
    overflow: hidden;
    color: #111;
}
td:first-child{
    padding-left: 3px;
}
tbody tr:nth-child(even){
    background-color: #e3eefd;
}
.num{
    text-align: right;
}
.c-account{
    width: 113px;
}
.c-amount{
    width: 97px;
}
.c-job{
    width: 110px;
}
.c-bill{
    width: 61px;
}
.c-class{
    width: 48px;
}
.scroll{
    display: flex;
    flex-direction: column;
    justify-content: space-between;
    width: 14px;
    margin-top: 22px;
    background-color: #efefef;
    border-top: 1px solid #a9a9a9;
}
.scroll button{
    width: 14px;
    height: 14px;
    padding: 2px;
    background-color: #dcdcdc;
}
.actions{
    flex: none;
    display: flex;
    justify-content: flex-end;
    gap: 4px;
    margin-top: 10px;
}
.actions button{
    width: 100px;
    height: 26px;
    font-weight: bold;
    color: #444;
    background: linear-gradient(#fff, #f0f0f0);
    border: 1px solid #c6c6c6;
    border-radius: 3px;
}
.actions .primary{
    width: 109px;
    color: #fff;
    background: linear-gradient(#5b87d6, #3763b8);
    border-color: #2f55a0;
}
.actions .revert{
    width: 88px;
}

/* vendor details */
.details{
    width: 251px;
    flex: none;
    display: flex;
    flex-direction: column;
    margin: 0 2px 18px 0;
    padding: 0 9px 10px 8px;
    background-color: #b0b0b0;
}
.details h2{
    display: flex;
    align-items: center;
    gap: 9px;
    height: 29px;
    padding: 0 0 2px 2px;
    font-size: 13px;
    color: #fff;
}
.detail-tabs{
    display: flex;
    gap: 2px;
}
.detail-tabs button{
    height: 23px;
    width: 83px;
    background-color: #686868;
    color: #cfcfcf;
    border-radius: 4px 4px 0 0;
}
.detail-tabs button:last-child{
    flex: 1;
    border-radius: 4px 0 0 0;
}
.detail-tabs .active{
    background-color: #fff;
    font-weight: bold;
    color: #222;
}
.detail-body{
    flex: 1;
    display: flex;
    flex-direction: column;
    background-color: #fff;
    border-radius: 0 3px 5px 5px;
    padding: 21px 6px 6px 9px;
}
.summary{
    flex: 5;
}
.recent{
    flex: 4;
}
.notes{
    flex: 3;
}
.head{
    display: flex;
    justify-content: space-between;
    height: 30px;
    border-bottom: 1px solid #d9d9d9;
}
.head h3{
    align-self: flex-end;
    font-size: 10px;
    line-height: 19px;
    color: #111;
}
.head button{
    width: 22px;
    height: 22px;
    padding: 1px;
    border: 1px solid #c8c8c8;
    border-radius: 2px;
    background-color: #fafafa;
}
.detail-body p{
    display: flex;
    justify-content: space-between;
    line-height: 28px;
    padding-right: 1px;
}
.detail-body p a{
    color: #3d63a3;
}
.red{
    color: #a82138;
}
```
